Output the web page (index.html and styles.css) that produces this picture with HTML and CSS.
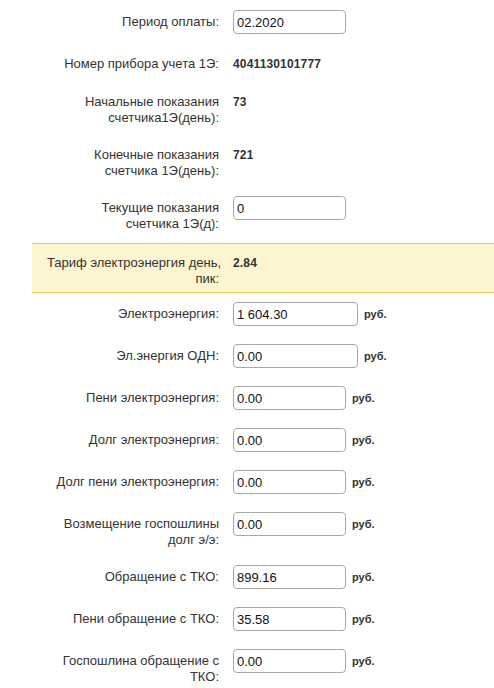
FILE: index.html
```html
<!DOCTYPE html>
<html lang="ru">
<head>
<meta charset="utf-8">
<title>Показания</title>
<link rel="stylesheet" href="styles.css">
</head>
<body>
<div class="form">
  <div class="row">
    <div class="label">Период оплаты:</div>
    <div class="value"><input class="field" type="text" value="02.2020"></div>
  </div>
  <div class="row">
    <div class="label">Номер прибора учета 1Э:</div>
    <div class="value"><span class="text">4041130101777</span></div>
  </div>
  <div class="row">
    <div class="label">Начальные показания<br>счетчика1Э(день):</div>
    <div class="value"><span class="text">73</span></div>
  </div>
  <div class="row">
    <div class="label">Конечные показания<br>счетчика 1Э(день):</div>
    <div class="value"><span class="text">721</span></div>
  </div>
  <div class="row">
    <div class="label">Текущие показания<br>счетчика 1Э(д):</div>
    <div class="value"><input class="field" type="text" value="0"></div>
  </div>
  <div class="row highlight">
    <div class="label">Тариф электроэнергия день,<br>пик:</div>
    <div class="value"><span class="text">2.84</span></div>
  </div>
  <div class="row">
    <div class="label">Электроэнергия:</div>
    <div class="value"><input class="field wide" type="text" value="1 604.30"><span class="unit">руб.</span></div>
  </div>
  <div class="row">
    <div class="label">Эл.энергия ОДН:</div>
    <div class="value"><input class="field wide" type="text" value="0.00"><span class="unit">руб.</span></div>
  </div>
  <div class="row">
    <div class="label">Пени электроэнергия:</div>
    <div class="value"><input class="field" type="text" value="0.00"><span class="unit">руб.</span></div>
  </div>
  <div class="row">
    <div class="label">Долг электроэнергия:</div>
    <div class="value"><input class="field" type="text" value="0.00"><span class="unit">руб.</span></div>
  </div>
  <div class="row">
    <div class="label">Долг пени электроэнергия:</div>
    <div class="value"><input class="field" type="text" value="0.00"><span class="unit">руб.</span></div>
  </div>
  <div class="row">
    <div class="label">Возмещение госпошлины<br>долг э/э:</div>
    <div class="value"><input class="field" type="text" value="0.00"><span class="unit">руб.</span></div>
  </div>
  <div class="row">
    <div class="label">Обращение с ТКО:</div>
    <div class="value"><input class="field" type="text" value="899.16"><span class="unit">руб.</span></div>
  </div>
  <div class="row">
    <div class="label">Пени обращение с ТКО:</div>
    <div class="value"><input class="field" type="text" value="35.58"><span class="unit">руб.</span></div>
  </div>
  <div class="row">
    <div class="label">Госпошлина обращение с<br>ТКО:</div>
    <div class="value"><input class="field" type="text" value="0.00"><span class="unit">руб.</span></div>
  </div>
</div>
</body>
</html>
```

FILE: styles.css
```css
html, body {
  margin: 0;
  padding: 0;
  background: #ffffff;
}

body {
  font-family: "Liberation Sans", Arial, sans-serif;
  font-size: 13px;
  color: #333333;
}

.form {
  margin-left: 32px;
  padding-top: 1px;
}

.row {
  display: grid;
  grid-template-columns: 172px 1fr;
  column-gap: 14px;
  align-items: start;
  padding: 9px 0 9px 15px;
}

.label {
  text-align: right;
  line-height: 16px;
  padding-top: 4px;
  margin-bottom: -1px;
  white-space: nowrap;
}

.value {
  display: flex;
  align-items: center;
  gap: 6px;
}

.text {
  font-weight: bold;
  font-size: 12px;
  line-height: 16px;
  padding-top: 4px;
  letter-spacing: 0.15px;
  color: #333333;
}

.field {
  box-sizing: border-box;
  width: 113px;
  height: 24px;
  margin: 0;
  padding: 0 3px;
  border: 1px solid #a8a8a8;
  border-radius: 4px;
  background: #ffffff;
  font-family: "Liberation Sans", Arial, sans-serif;
  font-size: 13px;
  color: #111111;
  outline: none;
}

.field.wide {
  width: 125px;
}

.unit {
  font-weight: bold;
  font-size: 11px;
  color: #333333;
}

.highlight {
  margin-top: 3px;
  padding-top: 7px;
  padding-bottom: 6px;
  background: #fcf5cf;
  border-top: 1px solid #ebd35f;
  border-bottom: 1px solid #ebd35f;
}
```
